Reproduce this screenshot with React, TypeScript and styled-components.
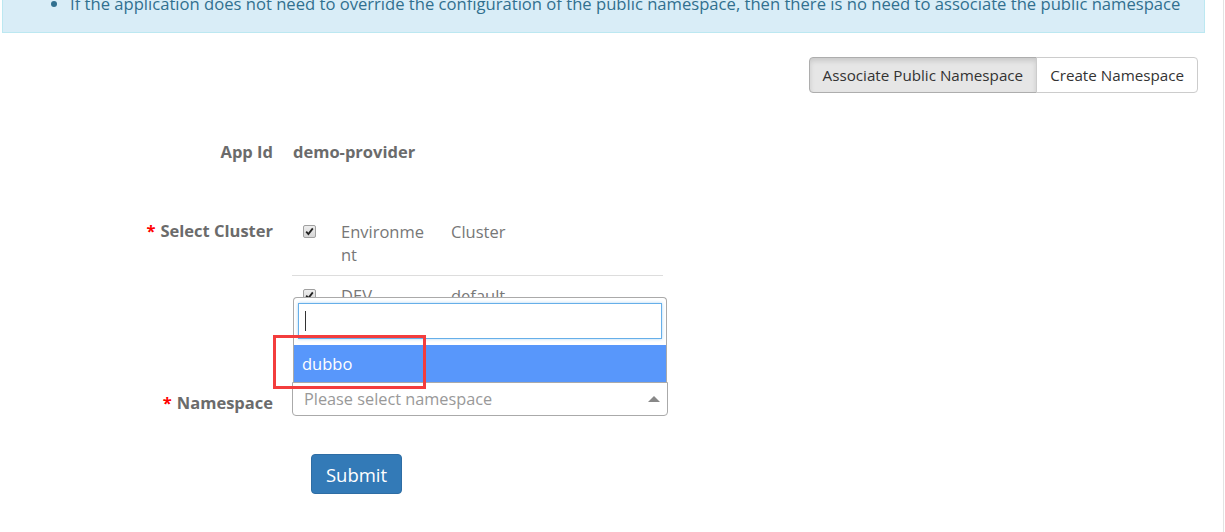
import React from "react";
import styled, { createGlobalStyle } from "styled-components";

const Global = createGlobalStyle`
  html, body { margin: 0; padding: 0; background: #fff; }
  body { font-family: "Open Sans", "Noto Sans", sans-serif; font-size: 14px; color: #333; }
  * { box-sizing: border-box; }
`;

const Page = styled.div`
  position: relative;
  width: 1224px;
  height: 532px;
  border-right: 1px solid #e3e3e3;
  overflow: hidden;
`;

const Alert = styled.div`
  margin: -17px 0 0 2px;
  width: 1203px;
  background: #d9edf7;
  border: 1px solid #bce8f1;
  color: #31708f;
  padding: 10px 15px 18px 0;
`;

const AlertList = styled.ul`
  margin: 0;
  padding-left: 67px;
  font-size: 16.63px;
  line-height: 20px;
  white-space: nowrap;
`;

const Toolbar = styled.div`
  display: flex;
  justify-content: flex-end;
  padding-right: 25px;
  margin-top: 24px;
`;

const BtnGroup = styled.div`
  display: flex;
`;

const GroupBtn = styled.button<{ $active?: boolean; $first?: boolean }>`
  font-family: inherit;
  font-size: 15.2px;
  line-height: 22px;
  height: 36px;
  padding: 6px 13px;
  color: #333;
  background: ${(p) => (p.$active ? "#e6e6e6" : "#fff")};
  border: 1px solid ${(p) => (p.$active ? "#adadad" : "#ccc")};
  box-shadow: ${(p) => (p.$active ? "inset 0 3px 5px rgba(0,0,0,.125)" : "none")};
  border-radius: ${(p) => (p.$first ? "4px 0 0 4px" : "0 4px 4px 0")};
  margin-left: ${(p) => (p.$first ? "0" : "-1px")};
  cursor: pointer;
`;

const Form = styled.div`
  margin-top: 49px;
`;

const Row = styled.div<{ $mt?: number }>`
  display: grid;
  grid-template-columns: 273px 1fr;
  column-gap: 19px;
  margin-top: ${(p) => p.$mt ?? 0}px;
`;

const Label = styled.div<{ $pt?: number }>`
  text-align: right;
  font-weight: 700;
  font-size: 16.5px;
  line-height: 20px;
  color: #6b6b6b;
  padding-top: ${(p) => p.$pt ?? 0}px;
`;

const Req = styled.span`
  color: #f00;
  margin-right: 5px;
`;

const Value = styled.div`
  font-weight: 700;
  font-size: 16.5px;
  line-height: 20px;
  color: #6b6b6b;
  padding-left: 1px;
`;

const Table = styled.table`
  width: 371px;
  border-collapse: collapse;
  table-layout: fixed;
  font-size: 16.5px;
  color: #777;
`;

const Cell = styled.td<{ $w?: number; $head?: boolean; $pr?: number }>`
  width: ${(p) => (p.$w ? `${p.$w}px` : "auto")};
  padding: 8px ${(p) => p.$pr ?? 8}px 8px 8px;
  line-height: 23px;
  vertical-align: top;
  word-break: break-all;
  border-bottom: ${(p) => (p.$head ? "1px solid #ddd" : "none")};
`;

const HeadCell = styled(Cell)`
  padding-bottom: 9px;
`;

const CheckCell = styled(Cell)`
  padding-left: 11px;
  padding-top: 13px;
`;

const Check = styled.span`
  display: inline-block;
  width: 13px;
  height: 13px;
  border: 1px solid #a0a0a0;
  border-radius: 2px;
  background: linear-gradient(#eee, #d6d6d6);
  position: relative;
  vertical-align: top;
  svg { position: absolute; left: 0px; top: 0px; }
`;

const SelectWrap = styled.div`
  position: relative;
  width: 376px;
`;

const SelectBox = styled.div`
  height: 34px;
  border: 1px solid #aaa;
  border-radius: 0 0 4px 4px;
  display: flex;
  align-items: center;
  justify-content: space-between;
  padding: 0 6px 0 11px;
  font-size: 16.3px;
  color: #999;
  background: #fff;
`;

const Arrow = styled.span`
  width: 0;
  height: 0;
  border-left: 6px solid transparent;
  border-right: 6px solid transparent;
  border-bottom: 6px solid #888;
  margin-right: 1px;
`;

const Dropdown = styled.div`
  position: absolute;
  left: 1px;
  right: 1px;
  bottom: 100%;
  background: #fff;
  border: 1px solid #aaa;
  border-bottom: none;
  border-radius: 4px 4px 0 0;
`;

const SearchBox = styled.div`
  margin: 5px 4px 6px 4px;
  height: 36px;
  border: 1px solid #66afe9;
  box-shadow: 0 0 3px rgba(102,175,233,.5);
  display: flex;
  align-items: center;
  padding-left: 6px;
`;

const Caret = styled.span`
  width: 1px;
  height: 20px;
  background: #333;
`;

const Option = styled.div`
  height: 37px;
  background: #5897fb;
  color: #fff;
  font-size: 16.5px;
  line-height: 37px;
  padding-left: 8px;
`;

const Submit = styled.button`
  margin-left: 19px;
  width: 91px;
  height: 40px;
  font-family: inherit;
  font-size: 18.5px;
  color: #fff;
  background: #337ab7;
  border: 1px solid #2e6da4;
  border-radius: 4px;
  padding: 0;
`;

const Annotation = styled.div`
  position: absolute;
  left: 273px;
  top: 335px;
  width: 153px;
  height: 54px;
  border: 3px solid #f33d3d;
  pointer-events: none;
`;

const CheckMark = () => (
  <svg width="11" height="11" viewBox="0 0 11 11">
    <path d="M2.2 5.6 L4.4 8 L8.8 2.4" stroke="#222" strokeWidth="1.8" fill="none" />
  </svg>
);

export default function App() {
  return (
    <>
      <Global />
      <Page>
        <Alert>
          <AlertList>
            <li>
              If the application does not need to override the configuration of the public namespace, then there is no need to associate the public namespace
            </li>
          </AlertList>
        </Alert>
        <Toolbar>
          <BtnGroup>
            <GroupBtn $active $first>Associate Public Namespace</GroupBtn>
            <GroupBtn>Create Namespace</GroupBtn>
          </BtnGroup>
        </Toolbar>
        <Form>
          <Row>
            <Label>App Id</Label>
            <Value>demo-provider</Value>
          </Row>
          <Row $mt={50}>
            <Label $pt={9}>
              <Req>*</Req>Select Cluster
            </Label>
            <div>
              <Table>
                <tbody>
                  <tr>
                    <CheckCell $w={41} $head>
                      <Check><CheckMark /></Check>
                    </CheckCell>
                    <HeadCell $w={110} $pr={14} $head>Environment</HeadCell>
                    <HeadCell $head>Cluster</HeadCell>
                  </tr>
                  <tr>
                    <CheckCell $w={41}>
                      <Check><CheckMark /></Check>
                    </CheckCell>
                    <Cell $w={110} $pr={14}>DEV</Cell>
                    <Cell>default</Cell>
                  </tr>
                </tbody>
              </Table>
            </div>
          </Row>
          <Row $mt={62}>
            <Label $pt={11}>
              <Req>*</Req>Namespace
            </Label>
            <SelectWrap>
              <Dropdown>
                <SearchBox><Caret /></SearchBox>
                <Option>dubbo</Option>
              </Dropdown>
              <SelectBox>
                <span>Please select namespace</span>
                <Arrow />
              </SelectBox>
            </SelectWrap>
          </Row>
          <Row $mt={38}>
            <div />
            <div>
              <Submit>Submit</Submit>
            </div>
          </Row>
        </Form>
        <Annotation />
      </Page>
    </>
  );
}
